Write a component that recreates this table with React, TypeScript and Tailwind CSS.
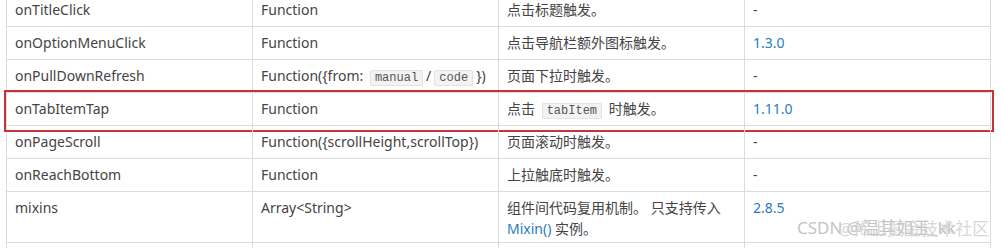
import React from "react";

const Code = ({ children }: { children: React.ReactNode }) => (
  <code className="mx-[3px] rounded-[2px] border border-[#e3e3e3] bg-[#f3f3f3] px-[4px] py-0 text-[12px] leading-[18px] text-[#555] [font-family:'Liberation_Mono',monospace]">
    {children}
  </code>
);

const Link = ({ children }: { children: React.ReactNode }) => (
  <span className="text-[#2a7bc4]">{children}</span>
);

type Row = { c: React.ReactNode[]; tall?: boolean; hi?: boolean };

const rows: Row[] = [
  { c: ["onTitleClick", "Function", "点击标题触发。", "-"] },
  { c: ["onOptionMenuClick", "Function", "点击导航栏额外图标触发。", <Link>1.3.0</Link>] },
  {
    c: [
      "onPullDownRefresh",
      <span>
        Function({"{"}from: <Code>manual</Code>/<Code>code</Code>{"}"})
      </span>,
      "页面下拉时触发。",
      "-",
    ],
  },
  {
    c: [
      "onTabItemTap",
      "Function",
      <span>
        点击 <Code>tabItem</Code> 时触发。
      </span>,
      <Link>1.11.0</Link>,
    ],
    hi: true,
  },
  { c: ["onPageScroll", "Function({scrollHeight,scrollTop})", "页面滚动时触发。", "-"] },
  { c: ["onReachBottom", "Function", "上拉触底时触发。", "-"] },
  {
    c: [
      "mixins",
      "Array<String>",
      <span>
        组件间代码复用机制。 只支持传入
        <br />
        <Link>Mixin()</Link> 实例。
      </span>,
      <Link>2.8.5</Link>,
    ],
    tall: true,
  },
];

export default function App() {
  return (
    <div className="relative h-[248px] w-[1001px] overflow-hidden bg-white text-[14px] text-[#444] [font-family:'Noto_Sans','Noto_Sans_CJK_SC',sans-serif]">
      <div className="ml-[6px] mt-[-6px] w-[985px] border-l border-[#dcdcdc]">
        {rows.map((r, i) => (
          <div key={i} className="relative">
            <div
              className={`grid grid-cols-[repeat(4,246px)] border-b border-[#dcdcdc] ${
                r.tall ? "h-[51px]" : "h-[33px]"
              }`}
            >
              {r.c.map((cell, j) => (
                <div
                  key={j}
                  className="border-r border-[#dcdcdc] px-[8px] pt-[5px] leading-[21px] whitespace-nowrap"
                >
                  {cell}
                </div>
              ))}
            </div>
            {r.hi && (
              <div className="pointer-events-none absolute left-[-3px] right-[-3px] top-[-3px] bottom-[-6px] border-2 border-[#c8333b]" />
            )}
          </div>
        ))}
        <div className="h-[33px] grid grid-cols-[repeat(4,246px)]">
          {[0, 1, 2, 3].map((j) => (
            <div key={j} className="border-r border-[#dcdcdc]" />
          ))}
        </div>
      </div>
      <div className="pointer-events-none absolute left-[797px] top-[216px] whitespace-nowrap text-[17px] leading-[24px] text-[#c4c4c4]">
        CSDN @温其如玉_kk
      </div>
      <div className="pointer-events-none absolute left-[838px] top-[217px] whitespace-nowrap text-[17px] leading-[24px] text-[#cfcfcf] opacity-80">
        @稀土掘金技术社区
      </div>
    </div>
  );
}
